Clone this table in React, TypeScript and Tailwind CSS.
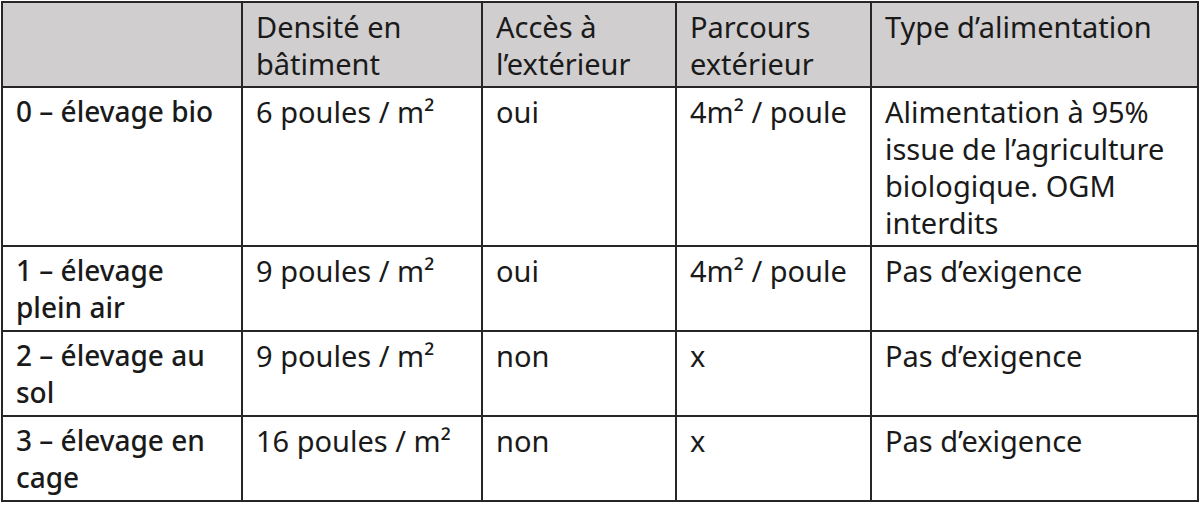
import React from "react";

type Row = { label: React.ReactNode; density: string; access: string; run: string; food: React.ReactNode };

const rows: Row[] = [
  {
    label: "0 – élevage bio",
    density: "6 poules / m²",
    access: "oui",
    run: "4m² / poule",
    food: (
      <>
        Alimentation à 95%
        <br />
        issue de l’agriculture
        <br />
        biologique. OGM
        <br />
        interdits
      </>
    ),
  },
  {
    label: (
      <>
        1 – élevage
        <br />
        plein air
      </>
    ),
    density: "9 poules / m²",
    access: "oui",
    run: "4m² / poule",
    food: "Pas d’exigence",
  },
  {
    label: (
      <>
        2 – élevage au
        <br />
        sol
      </>
    ),
    density: "9 poules / m²",
    access: "non",
    run: "x",
    food: "Pas d’exigence",
  },
  {
    label: (
      <>
        3 – élevage en
        <br />
        cage
      </>
    ),
    density: "16 poules / m²",
    access: "non",
    run: "x",
    food: "Pas d’exigence",
  },
];

function Th({ children }: { children?: React.ReactNode }) {
  return (
    <th className="border-2 border-[#262626] px-[13px] pt-[5px] pb-[4px] text-left align-top font-normal whitespace-nowrap">
      {children}
    </th>
  );
}

function Td({ children, className = "" }: { children: React.ReactNode; className?: string }) {
  return (
    <td className={`border-2 border-[#262626] px-[13px] pt-[5px] pb-[4px] align-top whitespace-nowrap ${className}`}>
      {children}
    </td>
  );
}

export default function App() {
  return (
    <div className="w-[1200px] h-[512px] bg-white pl-[1px] pt-[1px] font-['Noto_Sans',sans-serif] text-[29px] leading-[37px] text-[#1a1a1a]">
      <table className="table-fixed border-collapse w-[1196px]">
        <colgroup>
          <col className="w-[240px]" />
          <col className="w-[240px]" />
          <col className="w-[194px]" />
          <col className="w-[195px]" />
          <col className="w-[327px]" />
        </colgroup>
        <thead>
          <tr className="bg-[#d0cece]">
            <Th />
            <Th>
              Densité en
              <br />
              bâtiment
            </Th>
            <Th>
              Accès à
              <br />
              l’extérieur
            </Th>
            <Th>
              Parcours
              <br />
              extérieur
            </Th>
            <Th>Type d’alimentation</Th>
          </tr>
        </thead>
        <tbody>
          {rows.map((r, i) => (
            <tr key={i}>
              <Td className="font-medium text-[28px]">{r.label}</Td>
              <Td>{r.density}</Td>
              <Td>{r.access}</Td>
              <Td>{r.run}</Td>
              <Td>{r.food}</Td>
            </tr>
          ))}
        </tbody>
      </table>
    </div>
  );
}
